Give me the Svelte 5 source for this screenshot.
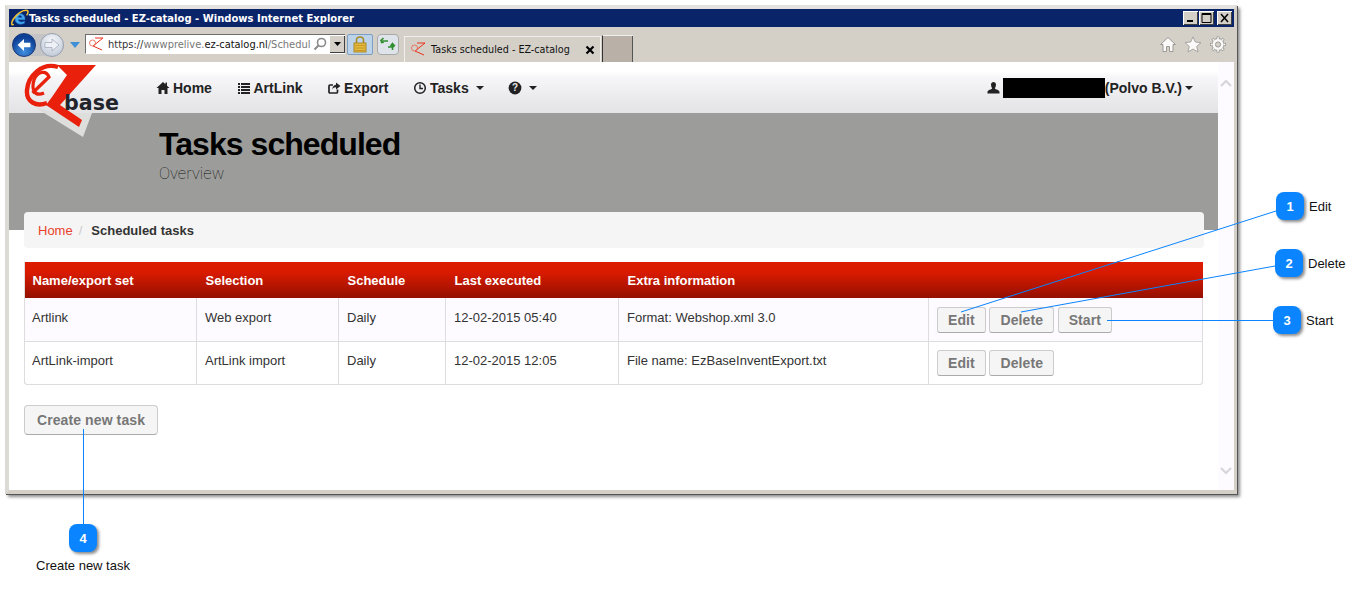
<script>
	const navItems = [
		{ label: 'Home', icon: 'home' },
		{ label: 'ArtLink', icon: 'list' },
		{ label: 'Export', icon: 'share' },
		{ label: 'Tasks', icon: 'clock', caret: true },
		{ label: '', icon: 'help', caret: true }
	];

	const tasks = [
		{
			name: 'Artlink',
			selection: 'Web export',
			schedule: 'Daily',
			last: '12-02-2015 05:40',
			extra: 'Format: Webshop.xml 3.0',
			actions: ['Edit', 'Delete', 'Start']
		},
		{
			name: 'ArtLink-import',
			selection: 'ArtLink import',
			schedule: 'Daily',
			last: '12-02-2015 12:05',
			extra: 'File name: EzBaseInventExport.txt',
			actions: ['Edit', 'Delete']
		}
	];

	// callouts sit on the free canvas round the screenshot
	const callouts = [
		{ n: 1, x: 1276, y: 192, label: 'Edit' },
		{ n: 2, x: 1275, y: 249, label: 'Delete' },
		{ n: 3, x: 1273, y: 306, label: 'Start' }
	];
</script>

<div class="canvas">
	<div class="window">
		<div class="titlebar">
			<svg class="ie" width="18" height="18" viewBox="0 0 18 18">
				<path d="M4 9.5 C4 3 14 3 14 9.5 V10.8 H7.2 C7.8 13.2 11 13.5 13.6 12 V14.2 C9 16.6 4 14.8 4 9.5 Z M7.2 8.4 H11 C10.6 6 7.6 6 7.2 8.4 Z" fill="#41a5ee" fill-rule="evenodd" stroke="#1c6cc0" stroke-width="0.5" />
				<path d="M2.8 15.4 C0 17 0.2 13.5 2.4 10 C5.4 5.2 11 1.2 15 1.2 C17.8 1.2 17.4 4 15.6 6.4" fill="none" stroke="#f2c230" stroke-width="1.5" />
			</svg>
			<span class="title-text">Tasks scheduled - EZ-catalog - Windows Internet Explorer</span>
			<div class="winbtns">
				<span class="winbtn"><svg width="15" height="14"><rect x="4" y="9" width="6" height="2" fill="#000" /></svg></span>
				<span class="winbtn"><svg width="15" height="14"><path d="M3 2.5 H12 V11.5 H3 Z M3 3.5 H12" fill="none" stroke="#000" /></svg></span>
				<span class="winbtn close"><svg width="15" height="14"><path d="M4 3 L11 11 M11 3 L4 11" stroke="#000" stroke-width="1.5" /></svg></span>
			</div>
		</div>

		<div class="toolbar">
			<div class="navpill">
				<span class="round back">
					<svg width="22" height="22" viewBox="0 0 24 24"><path d="M5 12 L12 5.5 V9.5 H19 V14.5 H12 V18.5 Z" fill="#fff" /></svg>
				</span>
				<span class="round fwd">
					<svg width="22" height="22" viewBox="0 0 22 22"><path d="M18 11 L11 5 V8.5 H4 V13.5 H11 V17 Z" fill="#eef1f6" stroke="#9aa4b4" stroke-width="0.7" /></svg>
				</span>
			</div>
			<svg class="recent" width="10" height="6"><path d="M0 0 H10 L5 6 Z" fill="#3f8fd6" /></svg>

			<div class="address">
				<svg class="fav" width="16" height="15" viewBox="0 0 16 15">
					<path d="M7 1 H15 L5 9 L14 13" fill="none" stroke="#e8301c" stroke-width="1" />
					<circle cx="4.5" cy="6" r="3" fill="none" stroke="#ea6a58" stroke-width="0.9" />
				</svg>
				<span class="url"><span class="dim1">https://</span><span class="dim">wwwprelive.</span>ez-catalog.nl<span class="dim">/Schedul</span></span>
				<svg class="search" width="14" height="14" viewBox="0 0 14 14">
					<circle cx="8.5" cy="5.5" r="4" fill="none" stroke="#8a8a8a" stroke-width="1.6" />
					<path d="M5.5 8.5 L1.5 12.5" stroke="#8a8a8a" stroke-width="2" />
				</svg>
				<span class="drop"><svg width="7" height="4"><path d="M0 0 H7 L3.5 4 Z" fill="#000" /></svg></span>
			</div>

			<span class="tool lock">
				<svg width="16" height="18" viewBox="0 0 16 18">
					<path d="M4.5 8 V5 C4.5 1 11.5 1 11.5 5 V8" fill="none" stroke="#a98a28" stroke-width="1.6" />
					<rect x="2" y="8" width="12" height="9" fill="#e5b93c" stroke="#a98a28" />
					<path d="M3 10.5 H13 M3 13 H13 M3 15.5 H13" stroke="#c89a28" />
				</svg>
			</span>
			<span class="tool refresh">
				<svg width="16" height="14" viewBox="0 0 16 14">
					<path d="M8 4 H3 L1 6 M3.5 1 L1 3.5 L3.5 6" fill="none" stroke="#2f8f2f" stroke-width="1.6" />
					<path d="M8 10 H13 L15 8 M12.5 13 V7 M10.5 9 L12.5 6.5 L14.5 9" fill="none" stroke="#2f8f2f" stroke-width="1.6" />
				</svg>
			</span>

			<div class="tab">
				<svg class="fav" width="16" height="15" viewBox="0 0 16 15">
					<path d="M7 1 H15 L5 9 L14 13" fill="none" stroke="#e8301c" stroke-width="1" />
					<circle cx="4.5" cy="6" r="3" fill="none" stroke="#ea6a58" stroke-width="0.9" />
				</svg>
				<span class="tab-text">Tasks scheduled - EZ-catalog</span>
				<svg class="tab-x" width="10" height="10"><path d="M1.5 1.5 L8.5 8.5 M8.5 1.5 L1.5 8.5" stroke="#000" stroke-width="2.2" /></svg>
			</div>
			<span class="newtab"></span>

			<div class="ie-right">
				<svg width="18" height="17" viewBox="0 0 18 17"><path d="M9 1.5 L1.5 8.5 H4 V15.5 H7.5 V10.5 H10.5 V15.5 H14 V8.5 H16.5 Z" fill="#fbfaf8" stroke="#9a9a97" /></svg>
				<svg width="18" height="17" viewBox="0 0 18 17"><path d="M9 0.8 L11.3 6 L17 6.6 L12.7 10.4 L14 16 L9 13 L4 16 L5.3 10.4 L1 6.6 L6.7 6 Z" fill="#fbfaf8" stroke="#a5a5a2" /></svg>
				<svg width="18" height="17" viewBox="0 0 18 17">
					<path d="M9 .5 V3 M9 14 V16.5 M1 8.5 H3.5 M14.5 8.5 H17 M3.3 2.8 L5 4.5 M13 12.5 L14.7 14.2 M14.7 2.8 L13 4.5 M5 12.5 L3.3 14.2" stroke="#9a9a97" stroke-width="3" />
					<circle cx="9" cy="8.5" r="6" fill="#fbfaf8" stroke="#9a9a97" />
					<path d="M9 1.2 V3 M9 14 V15.8 M1.8 8.5 H3.5 M14.5 8.5 H16.2 M3.8 3.3 L5 4.5 M13 12.5 L14.2 13.7 M14.2 3.3 L13 4.5 M5 12.5 L3.8 13.7" stroke="#fbfaf8" stroke-width="1.6" />
					<circle cx="9" cy="8.5" r="2.6" fill="#d4d0c8" stroke="#9a9a97" />
				</svg>
			</div>
		</div>

		<div class="viewport">
			<div class="page">
				<nav class="navbar">
					<div class="menu">
						{#each navItems as item}
							<span class="menu-item">
								<svg class="glyph" width="14" height="14" viewBox="0 0 14 14">
									{#if item.icon === 'home'}
										<path d="M7 1 L0.5 7 H2.5 V13 H5.5 V9 H8.5 V13 H11.5 V7 H13.5 L11 4.7 V1.5 H9.5 V3.3 Z" fill="#222" />
									{:else if item.icon === 'list'}
										<path d="M1 2 H3 V4 H1 Z M4 2 H13 V4 H4 Z M1 5 H3 V7 H1 Z M4 5 H13 V7 H4 Z M1 8 H3 V10 H1 Z M4 8 H13 V10 H4 Z M1 11 H3 V13 H1 Z M4 11 H13 V13 H4 Z" fill="#222" />
									{:else if item.icon === 'share'}
										<path d="M10.5 8.5 V11 Q10.5 12 9.5 12 H3 Q2 12 2 11 V5 Q2 4 3 4 H6" fill="none" stroke="#222" stroke-width="1.7" />
										<path d="M9 1.5 L13.5 5 L9 8.5 V6.3 C7 6.3 6 7 5.2 8.5 C5.4 5.8 6.8 3.8 9 3.7 Z" fill="#222" />
									{:else if item.icon === 'clock'}
										<circle cx="7" cy="7" r="5.3" fill="none" stroke="#222" stroke-width="1.5" />
										<path d="M7 3.5 V7.5 H10" fill="none" stroke="#222" stroke-width="1.4" />
									{:else}
										<circle cx="7" cy="7" r="6.4" fill="#222" />
										<text x="7" y="10.4" text-anchor="middle" class="help-mark">?</text>
									{/if}
								</svg>
								{#if item.label}<span>{item.label}</span>{/if}
								{#if item.caret}<i class="caret"></i>{/if}
							</span>
						{/each}
					</div>
					<div class="user">
						<svg width="13" height="13" viewBox="0 0 13 13"><path d="M4 3.5 C4 0 9 0 9 3.5 C9 5.5 8 7 7.8 7.6 C8.5 8.6 12.5 9 12.5 11 V12.5 H0.5 V11 C0.5 9 4.5 8.6 5.2 7.6 C5 7 4 5.5 4 3.5 Z" fill="#222" /></svg>
						<span class="redacted"></span>
						<span>(Polvo B.V.)</span>
						<i class="caret"></i>
					</div>
				</nav>

				<header class="hero">
					<h1>Tasks scheduled</h1>
					<p>Overview</p>
				</header>

				<div class="content">
					<div class="crumbs">
						<a href="#home" class="crumb-link">Home</a>
						<span class="crumb-sep">/</span>
						<span class="crumb-here">Scheduled tasks</span>
					</div>

					<div class="table-wrap">
						<table>
							<colgroup>
								<col style="width: 172px" />
								<col style="width: 142px" />
								<col style="width: 107px" />
								<col style="width: 173px" />
								<col style="width: 310px" />
								<col />
							</colgroup>
							<thead>
								<tr>
									<th>Name/export set</th>
									<th>Selection</th>
									<th>Schedule</th>
									<th>Last executed</th>
									<th>Extra information</th>
									<th></th>
								</tr>
							</thead>
							<tbody>
								{#each tasks as task}
									<tr>
										<td>{task.name}</td>
										<td>{task.selection}</td>
										<td>{task.schedule}</td>
										<td>{task.last}</td>
										<td>{task.extra}</td>
										<td class="actions">
											{#each task.actions as action}
												<button class="btn">{action}</button>
											{/each}
										</td>
									</tr>
								{/each}
							</tbody>
						</table>
					</div>

					<button class="btn create">Create new task</button>
				</div>
			</div>

			<div class="scrollbar">
				<svg width="12" height="8"><path d="M1 7 L6 2 L11 7" fill="none" stroke="#d6d6d8" stroke-width="2.2" /></svg>
				<svg width="12" height="8"><path d="M1 1 L6 6 L11 1" fill="none" stroke="#d6d6d8" stroke-width="2.2" /></svg>
			</div>
		</div>
	</div>

	<!-- logo hangs over navbar and hero -->
	<svg class="logo" width="110" height="76" viewBox="16 63 110 76">
		<path d="M36 108 L83 137 L92 113 L60 113 Z" fill="#dededc" />
		<path d="M57 65 H96 L60 105 L82 120 L79 127 L46 105 L52 97 L67 75 Z" fill="#e8200c" />
		<path d="M58 67 C42 62 28 76 27 90 C26 102 36 107 47 103" fill="none" stroke="#e8200c" stroke-width="4.4" />
		<path d="M32.5 93 L49 77 C46 69 37 72 34 80 C31 90 35 97 44 93" fill="none" stroke="#e8200c" stroke-width="3.2" />
		<text x="64" y="110" class="logo-base">base</text>
	</svg>

	<!-- callouts -->
	<svg class="leaders" width="1361" height="589">
		<path d="M1276 211 L961 312 M1275 266 L1021 312 M1273 320.5 L1107 320.5 M83.5 429 L83.5 524" fill="none" stroke="#0a84ff" />
	</svg>
	{#each callouts as c}
		<div class="callout" style="left: {c.x}px; top: {c.y}px">
			<span class="badge">{c.n}</span>
			<span class="callout-label">{c.label}</span>
		</div>
	{/each}
	<div class="callout stacked">
		<span class="badge">4</span>
		<span class="callout-label">Create new task</span>
	</div>
</div>

<style>
	:global(body) {
		margin: 0;
		background: #fff;
	}

	.canvas {
		position: relative;
		width: 1361px;
		height: 589px;
		overflow: hidden;
		font-family: 'Liberation Sans', Arial, sans-serif;
	}

	/* ── IE window ── */
	.window {
		position: absolute;
		left: 5px;
		top: 5px;
		width: 1232px;
		height: 489px;
		box-sizing: border-box;
		border: 4px solid #d4d0c8;
		border-top-color: #e4e2de;
		border-left-color: #dcdad5;
		border-right-width: 3px;
		box-shadow: 1px 1px 0 #555, 3px 3px 3px rgba(0, 0, 0, 0.45);
		display: flex;
		flex-direction: column;
	}

	.titlebar {
		height: 18px;
		flex: none;
		background: #0a246a;
		display: flex;
		align-items: center;
		padding-left: 2px;
		color: #fff;
	}

	.ie {
		flex: none;
	}

	.title-text {
		font-family: 'DejaVu Sans', sans-serif;
		font-weight: 700;
		font-size: 10px;
		white-space: nowrap;
	}

	.winbtns {
		margin-left: auto;
		display: flex;
		margin-right: 2px;
		gap: 1px;
	}

	.winbtn {
		width: 15px;
		height: 14px;
		background: #d4d0c8;
		box-shadow: inset 1px 1px 0 #fff, inset -1px -1px 0 #404040;
		display: block;
	}

	.winbtn svg {
		display: block;
	}

	.winbtn.close {
		margin-left: 2px;
	}

	.toolbar {
		height: 35px;
		flex: none;
		background: #d4d0c8;
		display: flex;
		align-items: center;
	}

	.navpill {
		display: flex;
		align-items: center;
		margin-left: 3px;
		background: #c4c4c6;
		border-radius: 13px;
		gap: 4px;
		height: 22px;
	}

	.round {
		width: 24px;
		height: 24px;
		box-sizing: border-box;
		border-radius: 50%;
		display: flex;
		align-items: center;
		justify-content: center;
	}

	.back {
		background: radial-gradient(circle at 50% 80%, #3f8fe0, #0d3f96 70%);
		border: 1px solid #1a3a78;
	}

	.fwd {
		background: radial-gradient(circle at 50% 30%, #f4f6fa, #b8c2d2);
		border: 1px solid #98a0ae;
	}

	.recent {
		margin-left: 6px;
		flex: none;
	}

	.address {
		margin-left: 5px;
		width: 260px;
		height: 20px;
		box-sizing: border-box;
		border: 1px solid #6e6e6e;
		border-bottom-color: #fff;
		border-right: none;
		background: #fff;
		display: flex;
		align-items: center;
		padding-left: 2px;
		flex: none;
		margin-top: -1px;
	}

	.fav {
		flex: none;
	}

	.url {
		font-family: 'DejaVu Sans', sans-serif;
		font-size: 9.9px;
		color: #111;
		margin-left: 4px;
		white-space: nowrap;
		width: 202px;
	}

	.dim {
		color: #777;
	}

	.dim1 {
		color: #333;
	}

	.search {
		flex: none;
		margin-left: 3px;
	}

	.drop {
		margin-left: auto;
		width: 16px;
		height: 18px;
		background: #d4d0c8;
		box-shadow: inset 1px 1px 0 #fff, inset -1px -1px 0 #404040;
		display: flex;
		align-items: center;
		justify-content: center;
	}

	.tool {
		height: 21px;
		box-sizing: border-box;
		border-radius: 2px;
		display: flex;
		align-items: center;
		justify-content: center;
		flex: none;
		margin-top: -1px;
	}

	.lock {
		width: 26px;
		margin-left: 2px;
		background: #bcd3ea;
		border: 1px solid #7e9fc4;
	}

	.refresh {
		width: 22px;
		margin-left: 4px;
		background: #dfe4ea;
		border: 1px solid #a9a9aa;
		border-radius: 4px;
	}

	.tab {
		align-self: flex-end;
		margin-left: 5px;
		width: 197px;
		height: 26px;
		box-sizing: border-box;
		border: 1px solid #f2f0ec;
		border-bottom: none;
		display: flex;
		align-items: center;
		padding-left: 5px;
		flex: none;
	}

	.tab-text {
		font-family: 'DejaVu Sans', sans-serif;
		font-size: 9.6px;
		color: #111;
		margin-left: 5px;
		white-space: nowrap;
	}

	.tab-x {
		margin-left: auto;
		margin-right: 5px;
	}

	.newtab {
		align-self: flex-end;
		width: 31px;
		height: 27px;
		box-sizing: border-box;
		background: #b9b1a8;
		border-left: 1px solid #333;
		border-top: 1px solid #eee;
		box-shadow: inset -1px 0 0 #555;
		margin-left: 1px;
	}

	.ie-right {
		margin-left: auto;
		margin-right: 7px;
		display: flex;
		gap: 7px;
	}

	/* ── page in the viewport ── */
	.viewport {
		flex: 1;
		min-height: 0;
		display: flex;
		background: #fff;
	}

	.page {
		flex: 1;
		min-width: 0;
		background: #fff;
	}

	.navbar {
		height: 51px;
		box-sizing: border-box;
		background: linear-gradient(#fff 0, #fff 20%, #f6f5f7 30%, #e3e3e5 100%);
		display: flex;
		align-items: center;
		font-weight: 700;
		font-size: 14px;
		color: #222;
	}

	.menu {
		display: flex;
		align-items: center;
		gap: 24.6px;
		margin-left: 147px;
	}

	.menu-item {
		display: flex;
		align-items: center;
		gap: 3px;
	}

	.glyph {
		flex: none;
	}

	.help-mark {
		font-size: 10px;
		font-weight: 700;
		fill: #e8e8e8;
	}

	.caret {
		width: 0;
		height: 0;
		border-left: 4px solid transparent;
		border-right: 4px solid transparent;
		border-top: 4px solid #222;
		margin-left: 4px;
	}

	.user {
		margin-left: auto;
		margin-right: 25px;
		display: flex;
		align-items: center;
	}

	.user .caret {
		margin-left: 3px;
	}

	.redacted {
		width: 102px;
		height: 20px;
		background: #000;
		margin-left: 3px;
	}

	.hero {
		height: 117px;
		box-sizing: border-box;
		background: #9c9d9a;
		padding: 13px 0 0 150px;
		color: #000;
	}

	.hero h1 {
		margin: 0;
		font-size: 32px;
		line-height: 36px;
		font-weight: 700;
		letter-spacing: -0.95px;
	}

	.hero p {
		margin: 2px 0 0;
		font-family: Roboto, sans-serif;
		font-weight: 100;
		font-size: 16.6px;
		line-height: 20px;
		color: #111;
	}

	.content {
		padding: 0 14px 0 15px;
		margin-top: -18px;
	}

	.crumbs {
		height: 36px;
		box-sizing: border-box;
		background: #f5f5f5;
		border-radius: 4px;
		padding: 0 14px;
		display: flex;
		align-items: center;
		font-size: 13px;
	}

	.crumb-link {
		color: #e8412b;
		text-decoration: none;
	}

	.crumb-sep {
		color: #ccc;
		margin: 0 9px 0 6px;
	}

	.crumb-here {
		color: #333;
		font-weight: 700;
	}

	.table-wrap {
		margin: 14px 1px 0 0;
		border-radius: 0 0 4px 4px;
		box-shadow: inset 0 0 0 1px #ddd;
		overflow: hidden;
	}

	table {
		width: 100%;
		table-layout: fixed;
		border-collapse: collapse;
		font-size: 13px;
		color: #333;
	}

	th {
		height: 36px;
		padding: 0 8px 0 9px;
		text-align: left;
		color: #fff;
		font-weight: 700;
		background: linear-gradient(#dd1c00 0, #d81a00 30%, #941000 100%);
	}

	th:first-child,
	td:first-child {
		padding-left: 8px;
	}

	td {
		height: 43px;
		box-sizing: border-box;
		padding: 9px 8px 8px;
		line-height: 20px;
		vertical-align: top;
		border: 1px solid #ddd;
		border-top: none;
		white-space: nowrap;
		overflow: hidden;
	}

	td:first-child {
		padding-left: 7px;
	}

	tbody tr:first-child td {
		padding-top: 10px;
		background: #fdfbff;
	}

	tbody tr td.actions {
		padding: 8px 8px 0 8px;
		white-space: nowrap;
	}

	tbody tr:first-child td.actions {
		padding-top: 9px;
	}

	.btn {
		font-family: 'Liberation Sans', Arial, sans-serif;
		font-size: 14px;
		font-weight: 700;
		letter-spacing: 0.1px;
		color: #777;
		background: #f5f5f5;
		border: 1px solid #ccc;
		border-bottom-color: #aaa;
		border-radius: 3px;
		height: 26px;
		padding: 0 10px;
		vertical-align: top;
	}

	.btn + .btn {
		margin-left: 3.6px;
	}

	.create {
		display: block;
		margin-top: 20px;
		height: 30px;
		width: 134px;
		padding: 0;
		border-radius: 4px;
	}

	.scrollbar {
		width: 16px;
		flex: none;
		background: #fdfbff;
		display: flex;
		flex-direction: column;
		align-items: center;
		justify-content: space-between;
		padding: 17px 0 15px;
		box-sizing: border-box;
	}

	/* ── overlays ── */
	.logo {
		position: absolute;
		left: 16px;
		top: 63px;
	}

	.logo-base {
		font-family: 'DejaVu Sans', sans-serif;
		font-weight: 700;
		font-size: 20.6px;
		fill: #22242c;
	}

	.leaders {
		position: absolute;
		left: 0;
		top: 0;
		pointer-events: none;
	}

	.callout {
		position: absolute;
		display: flex;
		align-items: center;
		gap: 5px;
	}

	.badge {
		width: 28px;
		height: 28px;
		border-radius: 8px;
		background: #0a84ff;
		color: #fff;
		font-weight: 700;
		font-size: 13px;
		display: flex;
		align-items: center;
		justify-content: center;
		box-shadow: 2px 2px 3px rgba(0, 0, 0, 0.45);
	}

	.callout-label {
		font-size: 13px;
		color: #111;
	}

	.stacked {
		left: 23px;
		top: 524px;
		width: 120px;
		flex-direction: column;
		gap: 6px;
	}
</style>
